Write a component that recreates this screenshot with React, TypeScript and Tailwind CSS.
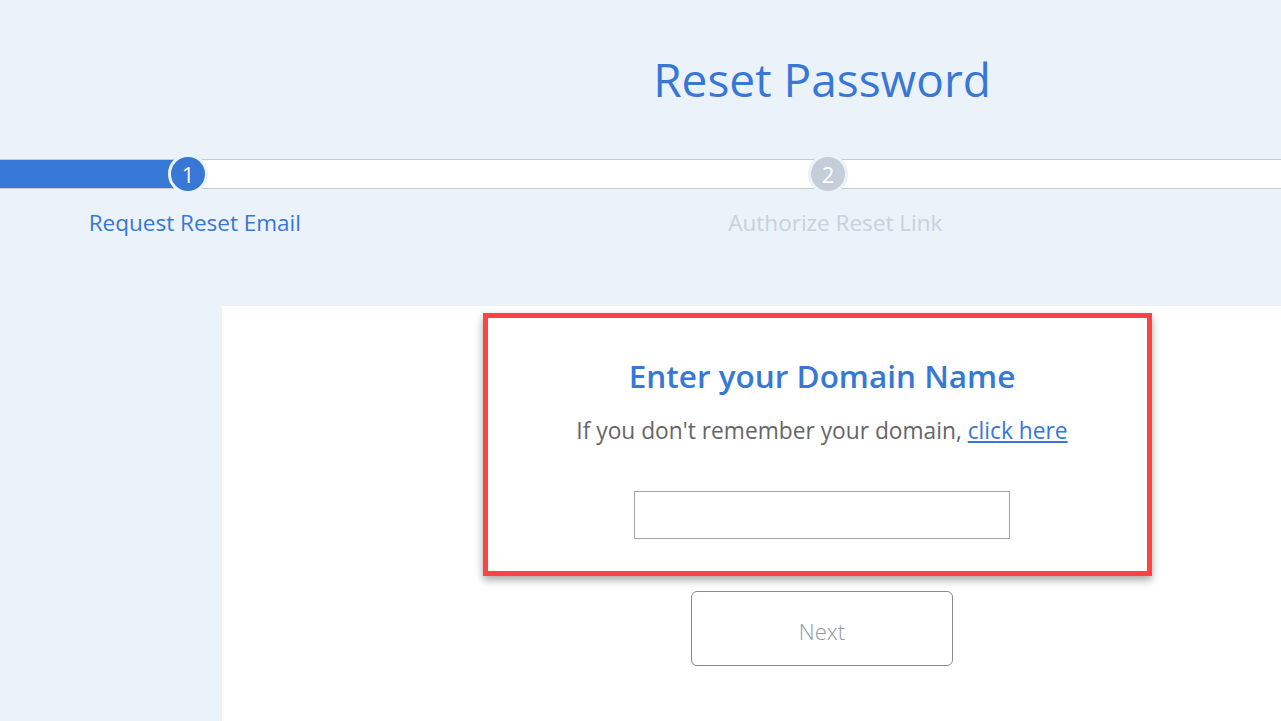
export default function App() {
  return (
    <div
      className="min-h-screen w-full overflow-hidden bg-[#EBF2FA]"
      style={{ fontFamily: '"Open Sans", "Noto Sans", sans-serif' }}
    >
      {/* title */}
      <div className="h-[159px] pl-[363px]">
        <h1 className="w-full pt-[51px] text-center text-[46px] font-medium leading-[56px] text-[#3777D6]">
          Reset Password
        </h1>
      </div>

      {/* progress bar */}
      <div className="relative h-[30px] border-y border-[#C6CBD2] bg-white">
        <div className="h-full w-[180px] bg-[#3777D6]" />
        <span className="absolute left-[168px] top-[-6px] flex h-[40px] w-[40px] items-center justify-center rounded-full border-[3px] border-[#EBF2FA] bg-[#3777D6] text-[22px] text-white">
          1
        </span>
        <span className="absolute left-[808px] top-[-6px] flex h-[40px] w-[40px] items-center justify-center rounded-full border-[3px] border-[#EBF2FA] bg-[#C5CDD9] text-[22px] text-white">
          2
        </span>
      </div>

      {/* step labels */}
      <div className="flex h-[117px] pt-[18px] text-[22.5px] leading-[32px]">
        <div className="w-[390px] text-center text-[#3777D6]">Request Reset Email</div>
        <div className="w-[892px] text-center text-[#C8D1DD]">Authorize Reset Link</div>
      </div>

      {/* panel */}
      <div className="ml-[222px] flex h-[415px] flex-col items-center bg-white pl-[141px] pt-[7px]">
        <div className="mr-[9px] flex h-[263px] w-[669px] flex-col items-center border-[5px] border-[#FF4343] bg-white pl-[9px] shadow-[0_4px_8px_rgba(0,0,0,0.35)]">
          <h2 className="mt-[38px] text-[31.5px] font-semibold leading-[40px] text-[#3777D6]">
            Enter your Domain Name
          </h2>
          <p className="mt-[20px] text-[22.75px] leading-[30px] text-[#666666]">
            If you don't remember your domain,{' '}
            <a className="text-[#3777D6] underline" href="#">
              click here
            </a>
          </p>
          <input
            type="text"
            className="mt-[45px] h-[48px] w-[376px] border border-[#A3A3A3] bg-white outline-none"
          />
        </div>
        <button className="mt-[15px] h-[75px] w-[262px] rounded-[6px] border border-[#8A8A8A] bg-white pt-[5px] text-[22px] font-light text-[#8E98A3]">
          Next
        </button>
      </div>
    </div>
  );
}
